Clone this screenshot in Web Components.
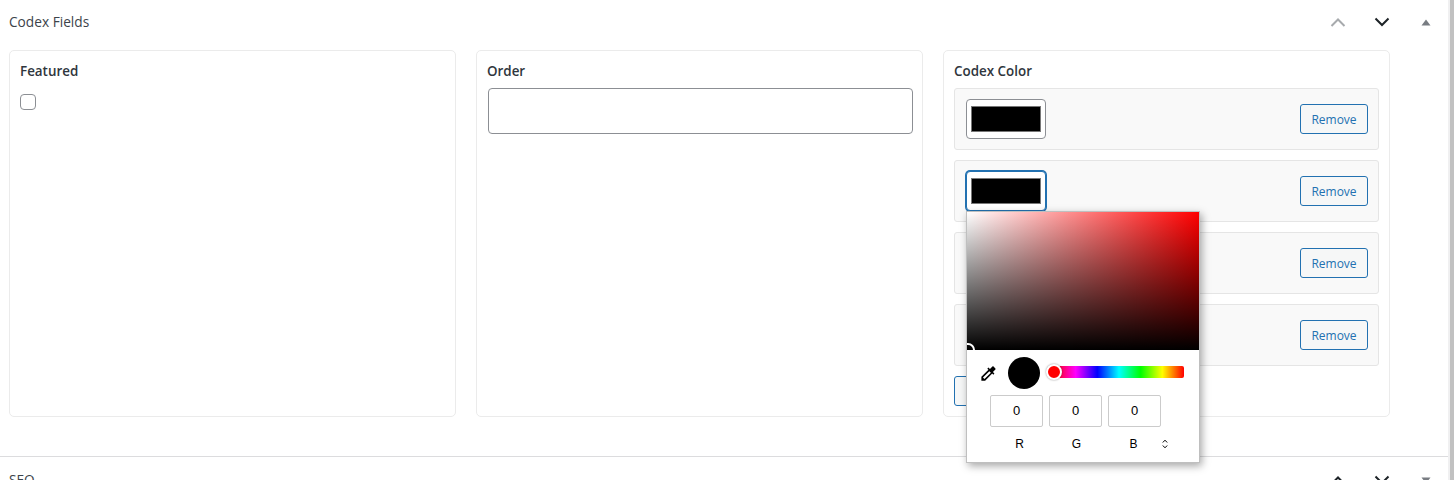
<!DOCTYPE html>
<html lang="en">
<head>
<meta charset="utf-8">
<title>Codex Fields</title>
<style>
  html, body { margin: 0; height: 480px; overflow: hidden; background: #fff; }
  body { font-family: "Open Sans", "Noto Sans", sans-serif; font-size: 13px; color: #3c434a; }
</style>
</head>
<body>
<meta-screen>
  <meta-box heading="Codex Fields">
    <field-card label="Featured"><check-box></check-box></field-card>
    <field-card label="Order"><text-box></text-box></field-card>
    <field-card label="Codex Color">
      <color-row></color-row>
      <color-row focused><color-picker></color-picker></color-row>
      <color-row></color-row>
      <color-row></color-row>
      <wp-button class="add">Add</wp-button>
    </field-card>
  </meta-box>
  <meta-box heading="SEO" collapsed></meta-box>
</meta-screen>

<script>
class MetaScreen extends HTMLElement {
  constructor() {
    super();
    this.attachShadow({ mode: "open" });
    this.shadowRoot.innerHTML = `
      <style>
        :host { display: flex; width: 1454px; height: 480px; overflow: hidden; }
        .main { width: 1448px; flex: none; }
        .track { width: 2px; background: #f0f0f1; flex: none; }
        .thumb { width: 4px; background: #c1c1c1; flex: none; }
      </style>
      <div class="main"><slot></slot></div>
      <div class="track"></div>
      <div class="thumb"></div>
    `;
  }
}

class MetaBox extends HTMLElement {
  constructor() {
    super();
    this.attachShadow({ mode: "open" });
    this.shadowRoot.innerHTML = `
      <style>
        :host { display: block; border-bottom: 1px solid #dcdcde; }
        :host([collapsed]) { border-bottom: 0; padding-top: 1px; }
        header { display: flex; align-items: center; height: 44px; padding-left: 9px; }
        h2 { flex: 1; margin: 0; font-size: 13.7px; font-weight: 400; line-height: 1.4; color: #3c434a; }
        button { width: 44px; height: 44px; padding: 0; border: 0; background: none; display: flex; align-items: center; justify-content: center; }
        svg { display: block; }
        .grid { display: grid; grid-template-columns: repeat(3, 447px); gap: 20px; padding: 6px 0 39px 9px; }
        :host([collapsed]) .grid { display: none; }
        :host([collapsed]) .toggle svg { transform: rotate(180deg); }
      </style>
      <header>
        <h2></h2>
        <button aria-label="Move up">
          <svg width="16" height="10" viewBox="0 0 16 10" fill="none" stroke="currentColor" stroke-width="2"><path d="M1.5 9 8 2.5 14.5 9"/></svg>
        </button>
        <button aria-label="Move down">
          <svg width="16" height="10" viewBox="0 0 16 10" fill="none" stroke="#1d2327" stroke-width="2"><path d="M1.5 1.5 8 8l6.500-6.500"/></svg>
        </button>
        <button class="toggle" aria-label="Toggle panel">
          <svg width="10" height="7" viewBox="0 0 10 7" fill="#787c82"><path d="M5 0.500 9.500 6.500H0.500z"/></svg>
        </button>
      </header>
      <div class="grid"><slot></slot></div>
    `;
    this.shadowRoot.querySelector("h2").textContent = this.getAttribute("heading");
    // the first arrow is disabled on the top box only
    this.shadowRoot.querySelector("button").style.color = this.hasAttribute("collapsed") ? "#1d2327" : "#a7aaad";
  }
}

class FieldCard extends HTMLElement {
  constructor() {
    super();
    this.attachShadow({ mode: "open" });
    this.shadowRoot.innerHTML = `
      <style>
        :host { display: block; box-sizing: border-box; height: 367px; padding: 10px; border: 1px solid #ebebeb; border-radius: 5px; }
        label { display: block; font-size: 13.4px; font-weight: 600; line-height: 20px; margin-bottom: 7px; color: #2f363d; }
        .body { display: flex; flex-direction: column; gap: 10px; align-items: flex-start; }
      </style>
      <label></label>
      <div class="body"><slot></slot></div>
    `;
    this.shadowRoot.querySelector("label").textContent = this.getAttribute("label");
  }
}

class CheckBox extends HTMLElement {
  constructor() {
    super();
    this.attachShadow({ mode: "open" });
    this.shadowRoot.innerHTML = `
      <style>
        :host { display: block; box-sizing: border-box; width: 16px; height: 16px; margin-top: 6px; border: 1px solid #8c8f94; border-radius: 4px; background: #fff; }
      </style>
    `;
  }
}

class TextBox extends HTMLElement {
  constructor() {
    super();
    this.attachShadow({ mode: "open" });
    this.shadowRoot.innerHTML = `
      <style>
        :host { display: block; box-sizing: border-box; width: 425px; height: 46px; margin-left: 1px; border: 1px solid #8c8f94; border-radius: 4px; background: #fff; }
      </style>
    `;
  }
}

class WpButton extends HTMLElement {
  constructor() {
    super();
    this.attachShadow({ mode: "open" });
    this.shadowRoot.innerHTML = `
      <style>
        :host { display: inline-flex; align-items: center; justify-content: center; box-sizing: border-box; height: 30px; padding: 1px 10px 0; min-width: 68px; border: 1px solid #2271b1; border-radius: 3px; background: #f6f7f7; color: #2271b1; font-size: 12px; line-height: 1; }
      </style>
      <slot></slot>
    `;
  }
}

class ColorRow extends HTMLElement {
  constructor() {
    super();
    this.attachShadow({ mode: "open" });
    this.shadowRoot.innerHTML = `
      <style>
        :host { display: flex; align-items: center; justify-content: space-between; box-sizing: border-box; width: 425px; height: 62px; padding: 0 10px 0 11px; border: 1px solid #e5e5e5; border-radius: 3px; background: #f9f9f9; }
        .anchor { position: relative; }
        .swatch { box-sizing: border-box; width: 80px; height: 40px; padding: 6px 4px; border: 1px solid #8c8f94; border-radius: 4px; background: #fff; }
        .swatch i { display: block; box-sizing: border-box; height: 100%; border: 1px solid #777; background: #000; }
        :host([focused]) .swatch { border-color: #2271b1; box-shadow: 0 0 0 1px #2271b1; }
      </style>
      <div class="anchor">
        <div class="swatch"><i></i></div>
        <slot></slot>
      </div>
      <wp-button>Remove</wp-button>
    `;
  }
}

class ColorPicker extends HTMLElement {
  constructor() {
    super();
    this.attachShadow({ mode: "open" });
    this.shadowRoot.innerHTML = `
      <style>
        :host { position: absolute; z-index: 5; left: 0; top: 40px; display: block; box-sizing: border-box; width: 234px; height: 252px; border: 1px solid #bfbfbf; background: #fff; box-shadow: 2px 3px 8px rgba(0,0,0,.35); font-family: "Liberation Sans", Arial, sans-serif; font-size: 12px; color: #000; }
        .field { position: relative; height: 138px; overflow: hidden; background: linear-gradient(to top, #000, rgba(0,0,0,0)), linear-gradient(to right, #fff, #f00); }
        .field i { position: absolute; left: -6px; top: 131px; width: 10px; height: 10px; border: 2px solid #fff; border-radius: 50%; }
        .tools { display: flex; align-items: center; height: 32px; margin-top: 7px; }
        .dropper { display: block; margin: 0 10px 0 12px; }
        .dot { width: 32px; height: 32px; border-radius: 50%; background: #000; margin-right: 14px; }
        .hue { position: relative; width: 130px; height: 12px; margin-top: -2px; border-radius: 2px; background: linear-gradient(to right, #f00, #f0f, #00f, #0ff, #0f0, #ff0, #f00); }
        .hue i { position: absolute; left: -8px; top: -2px; box-sizing: border-box; width: 16px; height: 16px; border: 2px solid #fff; border-radius: 50%; background: #f00; box-shadow: 0 0 2px rgba(0,0,0,.45); }
        .values { display: flex; gap: 6px; margin: 6px 0 0 23px; }
        .values div { box-sizing: border-box; width: 53px; height: 32px; border: 1px solid #cbcbcb; border-radius: 2px; text-align: center; line-height: 30px; font-size: 13px; }
        .names { display: flex; align-items: center; height: 16px; margin: 9px 0 0 24px; }
        .names span { width: 57px; text-align: center; }
        .names svg { display: block; margin-left: 0; }
      </style>
      <div class="field"><i></i></div>
      <div class="tools">
        <svg class="dropper" width="19" height="19" viewBox="0 0 24 24"><path d="M20.710 5.630l-2.340-2.340c-.39-.39-1.020-.39-1.410 0l-3.120 3.120-1.930-1.910-1.410 1.410 1.420 1.420L3 16.250V21h4.750l8.920-8.920 1.420 1.420 1.410-1.410-1.920-1.920 3.120-3.120c.4-.4.4-1.030.01-1.420zM6.920 19L5 17.080l8.060-8.060 1.920 1.920L6.920 19z"/></svg>
        <div class="dot"></div>
        <div class="hue"><i></i></div>
      </div>
      <div class="values"><div>0</div><div>0</div><div>0</div></div>
      <div class="names">
        <span>R</span><span>G</span><span>B</span>
        <svg width="6" height="10" viewBox="0 0 6 10" fill="none" stroke="#000" stroke-width="1"><path d="M.8 3.500 3 1.200 5.200 3.500M.8 6.500 3 8.800 5.200 6.500"/></svg>
      </div>
    `;
  }
}

customElements.define("meta-screen", MetaScreen);
customElements.define("meta-box", MetaBox);
customElements.define("field-card", FieldCard);
customElements.define("check-box", CheckBox);
customElements.define("text-box", TextBox);
customElements.define("wp-button", WpButton);
customElements.define("color-row", ColorRow);
customElements.define("color-picker", ColorPicker);
</script>
</body>
</html>
